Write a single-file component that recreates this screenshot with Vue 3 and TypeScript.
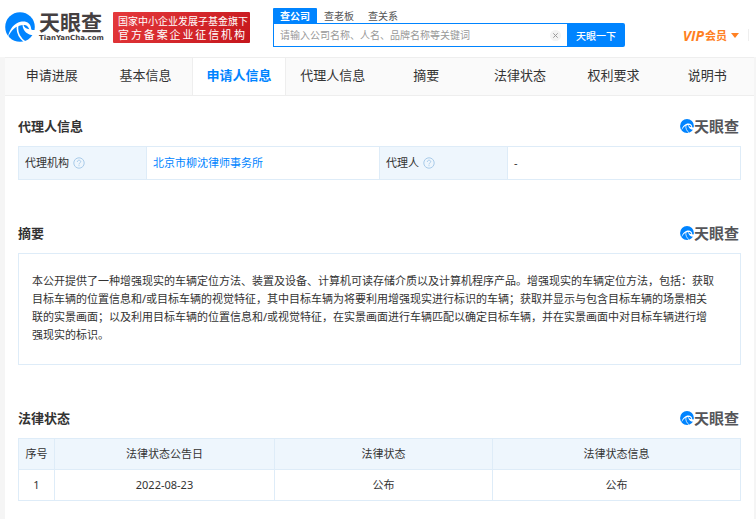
<script setup lang="ts">
import { defineComponent, h, ref } from 'vue'

const LogoMark = defineComponent({
  name: 'LogoMark',
  setup: () => () =>
    h('svg', { viewBox: '0 0 30 30', 'aria-hidden': 'true' }, [
      h('circle', { cx: 15, cy: 15, r: 14.8, fill: '#0084ff' }),
      h('path', {
        d: 'M2.800 25.500C4.500 17 9 11.500 15.500 9.800C21 8.500 26 11 26.300 17.500C27.500 18.200 29 18.300 31 17.800L29.500 23C23.500 23.500 18 20 17.500 13C11 13.500 6 18.500 2.800 25.500Z',
        fill: '#fff',
      }),
      h('path', {
        d: 'M18.500 13.200C20.500 12.600 23 14 24.300 17.300C21.500 16.800 19.300 15.500 18.500 13.200Z',
        fill: '#0084ff',
      }),
      h('path', {
        d: 'M12.800 13C11.500 19.500 14 25.500 20 30',
        fill: 'none',
        stroke: '#fff',
        'stroke-width': 1.6,
      }),
    ]),
})

const HelpIcon = defineComponent({
  name: 'HelpIcon',
  setup: () => () =>
    h('svg', { viewBox: '0 0 12 12', 'aria-hidden': 'true', fill: 'none', stroke: '#a9cbe9' }, [
      h('circle', { cx: 6, cy: 6, r: 5.2 }),
      h('path', { d: 'M4.300 4.900C4.300 2.600 7.700 2.700 7.700 4.700C7.700 5.900 6 5.900 6 7.400M6 8.200V9.200' }),
    ]),
})

const searchTabs = ['查公司', '查老板', '查关系']
const activeSearch = ref(0)
const keyword = ref('')

const tabs = ['申请进展', '基本信息', '申请人信息', '代理人信息', '摘要', '法律状态', '权利要求', '说明书']
const activeTab = ref(2)

const abstractLines = [
  '本公开提供了一种增强现实的车辆定位方法、装置及设备、计算机可读存储介质以及计算机程序产品。增强现实的车辆定位方法，包括：获取',
  '目标车辆的位置信息和/或目标车辆的视觉特征，其中目标车辆为将要利用增强现实进行标识的车辆；获取并显示与包含目标车辆的场景相关',
  '联的实景画面；以及利用目标车辆的位置信息和/或视觉特征，在实景画面进行车辆匹配以确定目标车辆，并在实景画面中对目标车辆进行增',
  '强现实的标识。',
]

interface LegalStatus {
  index: number
  date: string
  status: string
  info: string
}
const statuses: LegalStatus[] = [{ index: 1, date: '2022-08-23', status: '公布', info: '公布' }]
</script>

<template>
  <div class="page">
    <header class="header">
      <a class="logo" href="#">
        <LogoMark class="logo-mark" />
        <span class="logo-words">
          <span class="logo-name">天眼查</span>
          <span class="logo-domain">TianYanCha.com</span>
        </span>
      </a>
      <div class="banner">
        <span class="banner-top">国家中小企业发展子基金旗下</span>
        <span class="banner-bottom">官方备案企业征信机构</span>
      </div>
      <form class="search" @submit.prevent>
        <div class="search-tabs">
          <button
            v-for="(name, i) in searchTabs"
            :key="name"
            type="button"
            :class="['search-tab', { active: i === activeSearch }]"
            @click="activeSearch = i"
          >{{ name }}</button>
        </div>
        <div class="search-row">
          <div class="search-box">
            <input
              v-model="keyword"
              class="search-input"
              type="text"
              aria-label="搜索"
              placeholder="请输入公司名称、人名、品牌名称等关键词"
            />
            <button class="clear" type="button" aria-label="清空" @click="keyword = ''">
              <svg viewBox="0 0 11 11" aria-hidden="true">
                <circle cx="5.5" cy="5.5" r="5.5" fill="#f3f3f3" />
                <path d="M3.300 3.300L7.700 7.700M7.700 3.300L3.300 7.700" stroke="#999" />
              </svg>
            </button>
          </div>
          <button class="search-submit" type="submit">天眼一下</button>
        </div>
      </form>
      <a class="vip" href="#">
        <span class="vip-latin">VIP</span><span>会员</span>
        <svg class="caret" viewBox="0 0 8 5" aria-hidden="true"><path d="M0 0H8L4 5Z" fill="#ff8022" /></svg>
      </a>
    </header>

    <main class="content">
      <nav class="tabs">
        <a
          v-for="(name, i) in tabs"
          :key="name"
          href="#"
          :class="['tab', { active: i === activeTab }]"
          @click.prevent="activeTab = i"
        >{{ name }}</a>
      </nav>

      <section class="section">
        <div class="section-head">
          <h2>代理人信息</h2>
          <span class="mark"><LogoMark class="mark-icon" />天眼查</span>
        </div>
        <table class="grid info">
          <colgroup><col class="info-key" /><col /><col class="info-key" /><col /></colgroup>
          <tbody>
            <tr>
              <th scope="row"><span class="key">代理机构<HelpIcon class="help" /></span></th>
              <td><a class="link" href="#">北京市柳沈律师事务所</a></td>
              <th scope="row"><span class="key">代理人<HelpIcon class="help" /></span></th>
              <td>-</td>
            </tr>
          </tbody>
        </table>
      </section>

      <section class="section">
        <div class="section-head">
          <h2>摘要</h2>
          <span class="mark"><LogoMark class="mark-icon" />天眼查</span>
        </div>
        <p class="abstract">
          <span v-for="line in abstractLines" :key="line" class="abstract-line">{{ line }}</span>
        </p>
      </section>

      <section class="section">
        <div class="section-head">
          <h2>法律状态</h2>
          <span class="mark"><LogoMark class="mark-icon" />天眼查</span>
        </div>
        <table class="grid status">
          <colgroup><col class="c-index" /><col class="c-date" /><col class="c-status" /><col /></colgroup>
          <thead>
            <tr>
              <th scope="col">序号</th>
              <th scope="col">法律状态公告日</th>
              <th scope="col">法律状态</th>
              <th scope="col">法律状态信息</th>
            </tr>
          </thead>
          <tbody>
            <tr v-for="row in statuses" :key="row.index">
              <td>{{ row.index }}</td>
              <td>{{ row.date }}</td>
              <td>{{ row.status }}</td>
              <td>{{ row.info }}</td>
            </tr>
          </tbody>
        </table>
      </section>
    </main>
  </div>
</template>

<style>
body {
  background: #f5f5f5;
}
</style>

<style scoped>
.page,
.page button,
.page input {
  font-family: 'Noto Sans', 'Noto Sans CJK SC', sans-serif;
}
.page {
  display: flex;
  flex-direction: column;
  min-height: 100vh;
  font-size: 11px;
  color: #333;
}
.page *,
.page {
  box-sizing: border-box;
}
a {
  color: inherit;
  text-decoration: none;
}
button {
  border: 0;
  padding: 0;
  background: none;
  cursor: pointer;
}
.header {
  display: flex;
  align-items: flex-start;
  height: 57px;
  padding: 0 7px 0 5px;
  background: #fff;
}
.logo {
  display: flex;
  gap: 4px;
  width: 99px;
  padding-top: 12px;
}
.logo-mark {
  width: 30px;
  height: 30px;
}
.logo-words {
  display: flex;
  flex-direction: column;
  color: #454041;
  font-weight: 700;
}
.logo-name {
  font-size: 21px;
  line-height: 21px;
}
.logo-domain {
  font-family: 'DejaVu Sans', sans-serif;
  font-size: 7px;
  line-height: 10px;
}
.banner {
  display: flex;
  flex-direction: column;
  justify-content: center;
  width: 137px;
  height: 31px;
  margin: 12px 0 0 9px;
  padding: 0 5px;
  border-radius: 1px;
  background: linear-gradient(135deg, #e5393c, #c5161c);
  color: #fff;
  white-space: nowrap;
}
.banner-top {
  font-size: 10px;
  line-height: 14px;
}
.banner-bottom {
  font-size: 11px;
  line-height: 14px;
  text-align: justify;
  text-align-last: justify;
}
.search {
  width: 352px;
  margin: 8px 0 0 23px;
}
.search-tabs {
  display: flex;
}
.search-tab {
  width: 44px;
  height: 15px;
  font-size: 10px;
  line-height: 14px;
  color: #555;
}
.search-tab.active {
  border-radius: 1px 1px 0 0;
  background: #0084ff;
  color: #fff;
  font-weight: 700;
}
.search-row {
  display: flex;
  height: 24px;
}
.search-box {
  display: flex;
  flex: 1;
  align-items: center;
  padding: 0 6px;
  border: 1px solid #0084ff;
  border-right: 0;
}
.search-input {
  flex: 1;
  min-width: 0;
  padding: 0;
  border: 0;
  outline: 0;
  background: none;
  color: #333;
  font-size: 10px;
}
.search-input::placeholder {
  color: #999;
}
.clear,
.clear svg {
  display: block;
  width: 11px;
  height: 11px;
}
.search-submit {
  width: 58px;
  border-radius: 0 2px 2px 0;
  background: #0084ff;
  color: #fff;
  font-size: 10px;
  font-weight: 500;
}
.vip {
  display: flex;
  align-items: center;
  height: 12px;
  margin: 29px 0 0 auto;
  padding-right: 9px;
  border-right: 1px solid #eee;
  color: #ff8022;
  font-size: 11px;
  font-weight: 700;
}
.vip-latin {
  margin-right: 1px;
  font-family: 'Open Sans', sans-serif;
  font-size: 14px;
  font-style: italic;
  font-weight: 700;
}
.caret {
  width: 8px;
  height: 5px;
  margin-left: 4px;
}
.content {
  flex: 1;
  margin: 0 2px 0 5px;
  padding-bottom: 18px;
  background: #fff;
}
.tabs {
  display: grid;
  grid-template-columns: repeat(8, 1fr);
  height: 39px;
  border-top: 1px solid #eee;
  border-bottom: 1px solid #eee;
  background: #fafafa;
}
.tab {
  font-size: 13px;
  line-height: 34px;
  text-align: center;
  white-space: nowrap;
}
.tab.active {
  border: solid #eee;
  border-width: 0 1px;
  background: #fff;
  color: #0084ff;
  font-weight: 700;
}
.section {
  padding: 0 13px;
  margin-top: 43px;
}
.tabs + .section {
  margin-top: 20px;
}
.section-head {
  display: flex;
  align-items: center;
  justify-content: space-between;
  height: 20px;
  margin-bottom: 10px;
}
h2 {
  margin: 0;
  font-size: 13px;
  font-weight: 700;
  line-height: 20px;
  color: #333;
}
.mark {
  display: flex;
  align-items: center;
  padding-right: 2px;
  color: #555559;
  font-size: 15px;
  font-weight: 700;
  line-height: 20px;
}
.mark-icon {
  width: 14px;
  height: 14px;
}
.grid {
  width: 100%;
  border-collapse: collapse;
  table-layout: fixed;
}
.grid th,
.grid td {
  border: 1px solid #deecf8;
  font-weight: 400;
  line-height: 16px;
}
.grid th {
  background: #eef6fd;
}
.info th,
.info td {
  height: 33px;
  padding: 0 6px;
  text-align: left;
}
.info-key {
  width: 128px;
}
.key {
  display: flex;
  align-items: center;
  gap: 4px;
}
.help {
  width: 12px;
  height: 12px;
}
.link {
  color: #0084ff;
}
.status th,
.status td {
  height: 31px;
  padding: 0;
  text-align: center;
}
.c-index {
  width: 36px;
}
.c-date {
  width: 220px;
}
.c-status {
  width: 218px;
}
.abstract {
  margin: 0;
  padding: 18px 13px 20px;
  border: 1px solid #deecf8;
}
.abstract-line {
  display: block;
  line-height: 18px;
}
</style>
